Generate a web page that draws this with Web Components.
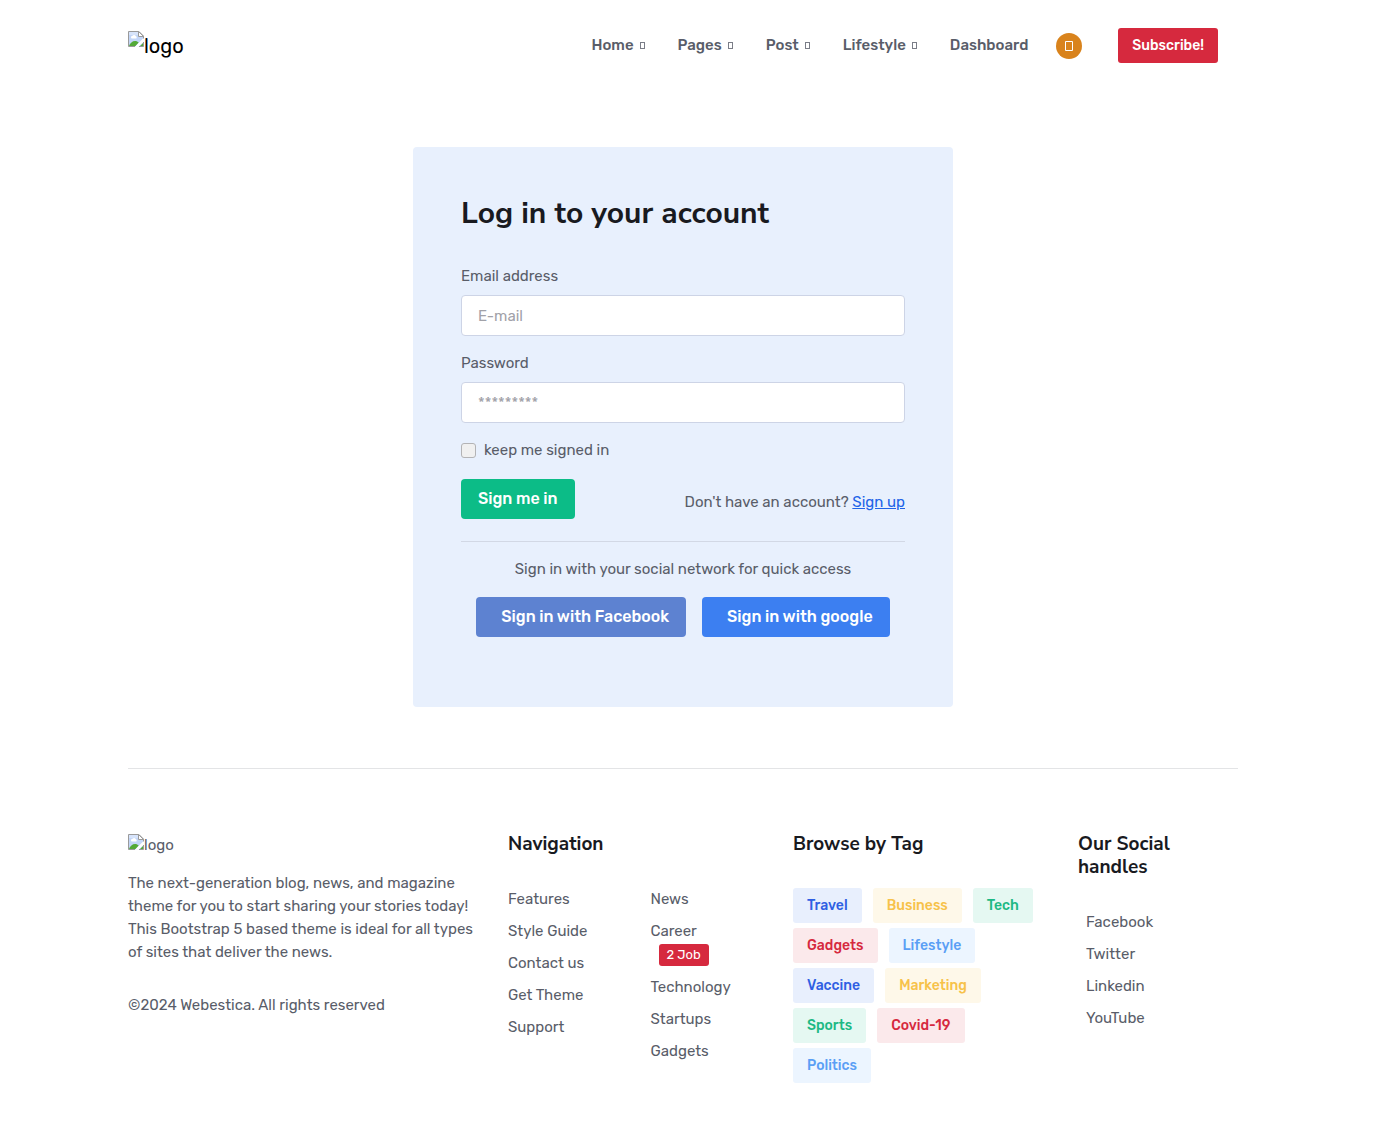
<!DOCTYPE html>
<html lang="en">
<head>
<meta charset="utf-8">
<meta name="viewport" content="width=device-width, initial-scale=1">
<title>Log in</title>
<style>
  :root {
    --heading: "Nunito Sans", Lato, sans-serif;
    --ink: #191a1f;
    --text: #595d69;
    --blue: #2163e8;
    --red: #d6293e;
    --green: #0cbc87;
  }
  body {
    margin: 0;
    padding-right: 8px;
    background: #fff;
    color: var(--text);
    font: 400 15px/23px Rubik, Roboto, sans-serif;
  }
</style>
</head>
<body>
<site-header>
  <nav-item menu>Home</nav-item>
  <nav-item menu>Pages</nav-item>
  <nav-item menu>Post</nav-item>
  <nav-item menu>Lifestyle</nav-item>
  <nav-item>Dashboard</nav-item>
</site-header>
<login-card></login-card>
<site-footer></site-footer>

<script>
const define = (name, html, setup) => {
  const template = document.createElement("template");
  template.innerHTML = html;
  customElements.define(name, class extends HTMLElement {
    constructor() {
      super();
      this.attachShadow({ mode: "open" }).append(template.content.cloneNode(true));
    }
    connectedCallback() {
      if (setup) setup(this, this.shadowRoot);
    }
  });
};

define("brand-logo", `
  <style>
    :host { display: block; }
    a { display: inline-flex; align-items: flex-start; color: inherit; text-decoration: none; }
    svg { width: 16px; height: 16px; flex: none; }
  </style>
  <a href="#">
    <svg viewBox="0 0 16 16" aria-hidden="true">
      <path d="M.5.5H11L15.500 5V15.500H.5Z" fill="#c3d6f8"/>
      <path d="M1 1h9v3H1z" fill="#d7e4fb"/>
      <path d="M3 6.500a1.500 1.500 0 0 1 1.500-1.700 2 2 0 0 1 3.500.5 1.200 1.200 0 0 1 0 2.200H4A1 1 0 0 1 3 6.500Z" fill="#fff"/>
      <path d="M1 15c1-3 3.500-5 6-5 1.500 0 2.800.6 3.700 1.500L7.500 15ZM12 15l3-3v3Z" fill="#53a937"/>
      <path d="M16 6.500 7 15.800h3.500L16 10.500Z" fill="#fff"/>
      <path d="M7 15.500H.5V.5H11L15.500 5v2.500M15.500 11v4.500H11" fill="none" stroke="#9a9a9a"/>
      <path d="M10.500.5V5.500H15.500Z" fill="#fff" stroke="#9a9a9a"/>
    </svg>
    <span><slot></slot></span>
  </a>`);

define("nav-item", `
  <style>
    :host { display: block; }
    a { display: flex; align-items: center; gap: 6px; color: var(--text); font-weight: 500; text-decoration: none; }
    i { display: none; width: 5px; height: 7px; box-sizing: border-box; border: 1px solid var(--text); opacity: .8; }
    :host([menu]) i { display: block; }
    :host([menu]) a { padding-right: 1px; }
  </style>
  <a href="#"><slot></slot><i></i></a>`);

define("ui-button", `
  <style>
    :host { display: inline-block; }
    button {
      display: block; box-sizing: border-box; height: 40px; padding: 0 17px;
      border: 0; border-radius: 4px; background: var(--green); color: #fff;
      font: 500 16px/24px Rubik, Roboto, sans-serif; cursor: pointer;
    }
    :host([tone=red]) button { height: 35px; padding: 0 14px; background: var(--red); font-size: 14px; border-radius: 3px; }
    :host([tone=facebook]) button { background: #5d82d1; padding-left: 25px; }
    :host([tone=google]) button { background: #3c7ff1; padding-left: 25px; }
  </style>
  <button type="button"><slot></slot></button>`);

define("site-header", `
  <style>
    :host { display: block; }
    header {
      display: flex; align-items: center; justify-content: space-between;
      max-width: 1110px; height: 91px; margin: 0 auto; padding: 0 15px;
    }
    brand-logo { padding-bottom: 6px; color: #000; font-size: 20px; line-height: 30px; }
    nav { display: flex; align-items: center; gap: 32px; }
    .right { display: flex; align-items: center; margin-right: 20px; }
    .mode {
      display: flex; align-items: center; justify-content: center; width: 26px; height: 26px;
      margin: 0 36px 0 28px; padding: 0; border: 0; border-radius: 50%; background: #d9831c;
    }
    .mode svg { width: 8px; height: 10px; }
  </style>
  <header>
    <brand-logo>logo</brand-logo>
    <div class="right">
      <nav><slot></slot></nav>
      <button class="mode" type="button" aria-label="Switch theme"><svg viewBox="0 0 8 10"><path d="M.5.5h7v9h-7z" fill="none" stroke="#fff"/></svg></button>
      <ui-button tone="red">Subscribe!</ui-button>
    </div>
  </header>`);

define("form-field", `
  <style>
    :host { display: block; margin-bottom: 16px; }
    label { display: block; margin-bottom: 7px; }
    input {
      display: block; box-sizing: border-box; width: 100%; height: 41px; padding: 0 16px;
      border: 1px solid #cdd4e6; border-radius: 4px; background: #fff; color: var(--text);
      font: inherit; outline: none;
    }
    input::placeholder { color: #a1a1a8; opacity: 1; }
  </style>
  <label for="field"><slot></slot></label>
  <input id="field">`,
  (host, root) => {
    const input = root.querySelector("input");
    input.type = host.getAttribute("type");
    input.placeholder = host.getAttribute("hint");
  });

define("login-card", `
  <style>
    :host { display: block; padding: 56px 15px 61px; }
    section {
      box-sizing: border-box; max-width: 540px; margin: 0 auto; padding: 48px 48px 70px;
      border-radius: 4px; background: #e8f0fd;
    }
    h2 { margin: 0 0 32px; color: var(--ink); font: 700 30px/38px var(--heading); }
    .keep { display: flex; align-items: center; gap: 8px; margin-bottom: 17px; }
    .keep input {
      appearance: none; box-sizing: border-box; width: 15px; height: 15px; margin: 0;
      border: 1px solid #b3b3b5; border-radius: 3px; background: #f0f0f0;
    }
    .submit { display: flex; align-items: center; justify-content: space-between; }
    .submit p { margin: 6px 0 0; }
    a { color: var(--blue); }
    hr { height: 1px; margin: 22px 0 16px; border: 0; background: #d2d8e5; }
    .hint { margin: 0 0 16px; text-align: center; }
    .social { display: flex; flex-wrap: wrap; justify-content: center; gap: 16px; }
  </style>
  <section>
    <h2>Log in to your account</h2>
    <form-field type="email" hint="E-mail">Email address</form-field>
    <form-field type="password" hint="*********">Password</form-field>
    <div class="keep"><input type="checkbox" id="keep"><label for="keep">keep me signed in</label></div>
    <div class="submit">
      <ui-button>Sign me in</ui-button>
      <p>Don't have an account? <a href="#">Sign up</a></p>
    </div>
    <hr>
    <p class="hint">Sign in with your social network for quick access</p>
    <div class="social">
      <ui-button tone="facebook">Sign in with Facebook</ui-button>
      <ui-button tone="google">Sign in with google</ui-button>
    </div>
  </section>`);

define("footer-link", `
  <style>
    :host { display: block; padding-bottom: 9px; }
    a { color: inherit; text-decoration: none; }
    ::slotted(b) {
      display: table; margin: 1px 0 1px 8px; padding: 0 8px; border-radius: 3px;
      background: var(--red); color: #fff; font-size: 13px; font-weight: 400; line-height: 22px;
    }
  </style>
  <a href="#"><slot></slot></a>`);

define("tag-chip", `
  <style>
    :host { display: block; }
    a {
      display: block; padding: 6px 14px; border-radius: 3px; background: #e8effd; color: #2f5fe3;
      font-size: 14px; font-weight: 500; line-height: 23px; text-decoration: none;
    }
    :host([tone=yellow]) a { background: #fef8e9; color: #f7c24a; }
    :host([tone=green]) a { background: #e5f8f2; color: #1db984; }
    :host([tone=red]) a { background: #fbe9eb; color: #d6293e; }
    :host([tone=sky]) a { background: #ecf5ff; color: #5a9ff5; }
  </style>
  <a href="#"><slot></slot></a>`);

define("site-footer", `
  <style>
    :host { display: block; padding: 0 15px 50px; }
    footer {
      display: grid; grid-template-columns: repeat(12, 1fr); column-gap: 30px;
      max-width: 1110px; margin: 0 auto; padding-top: 64px; border-top: 1px solid #e3e4e6;
    }
    .about { grid-column: span 4; }
    .wide { grid-column: span 3; }
    .slim { grid-column: span 2; }
    brand-logo { margin-top: 1px; }
    p { margin: 15px 0 0; }
    .legal { margin-top: 30px; }
    h5 { margin: 0 0 32px; color: var(--ink); font: 700 19px/23px var(--heading); }
    .lists { display: grid; grid-template-columns: 1fr 1fr; gap: 30px; }
    .slim footer-link { padding-left: 8px; }
    .tags { display: flex; flex-wrap: wrap; gap: 5px 11px; }
  </style>
  <footer>
    <div class="about">
      <brand-logo>logo</brand-logo>
      <p>The next-generation blog, news, and magazine theme for you to start sharing your stories today! This Bootstrap 5 based theme is ideal for all types of sites that deliver the news.</p>
      <p class="legal">©2024 Webestica. All rights reserved</p>
    </div>
    <div class="wide">
      <h5>Navigation</h5>
      <div class="lists">
        <div>
          <footer-link>Features</footer-link>
          <footer-link>Style Guide</footer-link>
          <footer-link>Contact us</footer-link>
          <footer-link>Get Theme</footer-link>
          <footer-link>Support</footer-link>
        </div>
        <div>
          <footer-link>News</footer-link>
          <footer-link>Career <b>2 Job</b></footer-link>
          <footer-link>Technology</footer-link>
          <footer-link>Startups</footer-link>
          <footer-link>Gadgets</footer-link>
        </div>
      </div>
    </div>
    <div class="wide">
      <h5>Browse by Tag</h5>
      <div class="tags">
        <tag-chip>Travel</tag-chip>
        <tag-chip tone="yellow">Business</tag-chip>
        <tag-chip tone="green">Tech</tag-chip>
        <tag-chip tone="red">Gadgets</tag-chip>
        <tag-chip tone="sky">Lifestyle</tag-chip>
        <tag-chip>Vaccine</tag-chip>
        <tag-chip tone="yellow">Marketing</tag-chip>
        <tag-chip tone="green">Sports</tag-chip>
        <tag-chip tone="red">Covid-19</tag-chip>
        <tag-chip tone="sky">Politics</tag-chip>
      </div>
    </div>
    <div class="slim">
      <h5>Our Social handles</h5>
      <footer-link>Facebook</footer-link>
      <footer-link>Twitter</footer-link>
      <footer-link>Linkedin</footer-link>
      <footer-link>YouTube</footer-link>
    </div>
  </footer>`);
</script>
</body>
</html>
